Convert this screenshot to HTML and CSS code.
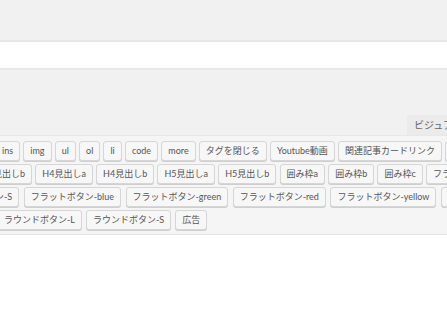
FILE: index.html
```html
<!DOCTYPE html>
<html lang="ja">
<head>
    <meta charset="UTF-8">
    <title>投稿の編集</title>
    <link rel="stylesheet" href="styles.css">
</head>
<body>
    <div class="wrap">
        <div class="title-wrap">
            <input class="title-input" type="text" value="">
        </div>

        <div class="editor">
            <div class="editor-tabs">
                <span class="switch-tab">ビジュアル</span>
            </div>
            <div class="qt-toolbar">
                <div class="qt-row row-1">
                    <span class="qt-btn">ins</span>
                    <span class="qt-btn">img</span>
                    <span class="qt-btn">ul</span>
                    <span class="qt-btn">ol</span>
                    <span class="qt-btn">li</span>
                    <span class="qt-btn">code</span>
                    <span class="qt-btn">more</span>
                    <span class="qt-btn">タグを閉じる</span>
                    <span class="qt-btn">Youtube動画</span>
                    <span class="qt-btn">関連記事カードリンク</span>
                    <span class="qt-btn">H2見出し</span>
                </div>
                <div class="qt-row row-2">
                    <span class="qt-btn">H3見出しb</span>
                    <span class="qt-btn">H4見出しa</span>
                    <span class="qt-btn">H4見出しb</span>
                    <span class="qt-btn">H5見出しa</span>
                    <span class="qt-btn">H5見出しb</span>
                    <span class="qt-btn">囲み枠a</span>
                    <span class="qt-btn">囲み枠b</span>
                    <span class="qt-btn">囲み枠c</span>
                    <span class="qt-btn">フラットボタン-L</span>
                </div>
                <div class="qt-row row-3">
                    <span class="qt-btn">フラットボタン-S</span>
                    <span class="qt-btn">フラットボタン-blue</span>
                    <span class="qt-btn">フラットボタン-green</span>
                    <span class="qt-btn">フラットボタン-red</span>
                    <span class="qt-btn">フラットボタン-yellow</span>
                    <span class="qt-btn">ラウンドボタン</span>
                </div>
                <div class="qt-row row-4">
                    <span class="qt-btn">ラウンドボタン-L</span>
                    <span class="qt-btn">ラウンドボタン-S</span>
                    <span class="qt-btn">広告</span>
                </div>
            </div>
            <div class="editor-area"></div>
        </div>
    </div>
</body>
</html>
```

FILE: styles.css
```css
* {
    margin: 0;
    padding: 0;
    box-sizing: border-box;
}

html, body {
    height: 100%;
}

body {
    font-family: Lato, 'Noto Sans CJK JP', sans-serif;
    background: #f1f1f1;
    color: #555;
    overflow: hidden;
}

.wrap {
    width: 100%;
    overflow: hidden;
}

.title-wrap {
    padding-top: 40px;
    margin: 0 -10px;
}

.title-input {
    display: block;
    width: 100%;
    height: 30px;
    border: none;
    border-top: 2px solid #e7e7e7;
    border-bottom: 2px solid #e7e7e7;
    background: #fff;
    outline: none;
}

.editor {
    margin-top: 45px;
}

.editor-tabs {
    display: flex;
    justify-content: flex-end;
    height: 20px;
    margin-right: -40px;
}

.switch-tab {
    width: 80px;
    height: 20px;
    padding: 0 7px;
    background: #ebebeb;
    font-size: 10px;
    line-height: 20px;
    color: #666;
    white-space: nowrap;
}

.qt-toolbar {
    background: #f5f5f5;
    border-top: 1px solid #e8e8e8;
    border-bottom: 1px solid #e2e2e2;
    padding: 5px 0 4px;
    display: flex;
    flex-direction: column;
    gap: 3px;
}

.qt-row {
    display: flex;
    gap: 3.2px;
    white-space: nowrap;
}

.row-1 { margin-left: -5px; }
.row-2 { margin-left: -26px; }
.row-3 { margin-left: -66px; gap: 4.5px; }
.row-4 { margin-left: -3px; gap: 4px; }

.qt-btn {
    flex: none;
    height: 20px;
    padding: 0 6px;
    min-width: 17px;
    text-align: center;
    background: #f7f7f7;
    border: 1px solid #d6d6d6;
    border-radius: 3px;
    box-shadow: 0 1px 0 #cfcfcf;
    font-size: 9px;
    line-height: 18px;
    color: #555;
}

.editor-area {
    background: #fff;
    height: 200px;
}
```
